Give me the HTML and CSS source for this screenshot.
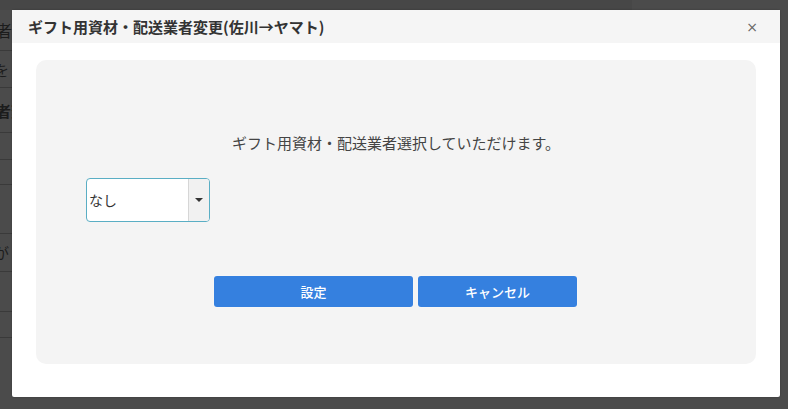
FILE: index.html
```html
<!DOCTYPE html>
<html lang="ja">
<head>
<meta charset="utf-8">
<link rel="stylesheet" href="styles.css">
</head>
<body>
<div class="page">
  <div class="topbar"></div>
  <div class="rows">
    <div class="row r1">者</div>
    <div class="row r2">を</div>
    <div class="row r3">者変</div>
    <div class="row r4"></div>
    <div class="row r5"></div>
    <div class="row r6"></div>
    <div class="row r7">が</div>
    <div class="row r8"></div>
    <div class="row r9"></div>
    <div class="row r10"></div>
  </div>
</div>
<div class="modal">
  <div class="modal-header">
    <span class="modal-title">ギフト用資材・配送業者変更(佐川→ヤマト)</span>
    <span class="close">×</span>
  </div>
  <div class="modal-body">
    <div class="panel">
      <p class="message">ギフト用資材・配送業者選択していただけます。</p>
      <div class="select">
        <span class="select-value">なし</span>
        <span class="select-arrow"><span class="caret"></span></span>
      </div>
      <div class="actions">
        <button class="btn btn-set">設定</button>
        <button class="btn btn-cancel">キャンセル</button>
      </div>
    </div>
  </div>
</div>
</body>
</html>
```
FILE: styles.css
```css
html, body {
  margin: 0;
  padding: 0;
}
body {
  width: 788px;
  height: 409px;
  overflow: hidden;
  background: #4b4b4b;
  font-family: "Noto Sans CJK JP", "Noto Sans", sans-serif;
  position: relative;
}
.page {
  width: 788px;
  height: 409px;
}
.topbar {
  height: 10px;
  width: 632px;
  background: #474747;
}
.rows {
  display: flex;
  flex-direction: column;
}
.row {
  border-bottom: 1px solid #3a3a3a;
  color: #1c1c1c;
  font-size: 15px;
  display: flex;
  align-items: center;
  box-sizing: border-box;
  white-space: nowrap;
  overflow: hidden;
  width: 20px;
}
.r1 { height: 41px; font-size: 16px; margin-left: -4px; }
.r2 { height: 37px; margin-left: -6px; }
.r3 { height: 45px; font-weight: bold; margin-left: -4px; }
.r4 { height: 27px; }
.r5 { height: 25px; }
.r6 { height: 49px; }
.r7 { height: 38px; margin-left: -6px; }
.r8 { height: 40px; }
.r9 { height: 26px; }
.r10 { height: 60px; border-bottom: none; }

.modal {
  position: absolute;
  left: 12px;
  top: 10px;
  width: 768px;
  height: 387px;
  background: #ffffff;
  border-radius: 2px;
  box-shadow: 0 0 2px rgba(0,0,0,0.3);
  display: flex;
  flex-direction: column;
}
.modal-header {
  height: 33px;
  background: #f5f5f5;
  display: flex;
  align-items: center;
  justify-content: space-between;
  padding: 0 22px 0 16px;
  box-sizing: border-box;
}
.modal-title {
  font-size: 15px;
  font-weight: bold;
  color: #333;
}
.close {
  font-size: 14px;
  color: #666;
  font-family: "DejaVu Sans", sans-serif;
  line-height: 1;
}
.modal-body {
  padding: 17px 24px 0 24px;
}
.panel {
  background: #f4f4f4;
  border-radius: 10px;
  height: 304px;
  display: flex;
  flex-direction: column;
  padding: 0 50px;
  box-sizing: border-box;
}
.message {
  margin: 73px 0 0 0;
  text-align: center;
  font-size: 15px;
  color: #444;
  line-height: 20px;
}
.select {
  margin-top: 25px;
  width: 124px;
  height: 44px;
  border: 1px solid #5aaec4;
  border-radius: 4px;
  background: #fff;
  box-sizing: border-box;
  display: flex;
  overflow: hidden;
}
.select-value {
  flex: 1;
  display: flex;
  align-items: center;
  padding-left: 2px;
  font-size: 14px;
  color: #333;
}
.select-arrow {
  width: 20px;
  background: #f1f1f1;
  border-left: 1px solid #d6d6d6;
  display: flex;
  align-items: center;
  justify-content: center;
}
.caret {
  width: 0;
  height: 0;
  border-left: 4px solid transparent;
  border-right: 4px solid transparent;
  border-top: 4px solid #333;
}
.actions {
  margin-top: 54px;
  display: flex;
  gap: 5px;
  padding-left: 128px;
}
.btn {
  height: 31px;
  border: none;
  border-radius: 3px;
  background: #3580df;
  color: #fff;
  font-family: inherit;
  font-size: 13px;
  font-weight: 500;
  padding: 0;
  box-shadow: 0 0 2px rgba(255,255,255,0.8);
}
.btn-set { width: 199px; }
.btn-cancel { width: 159px; }
```
